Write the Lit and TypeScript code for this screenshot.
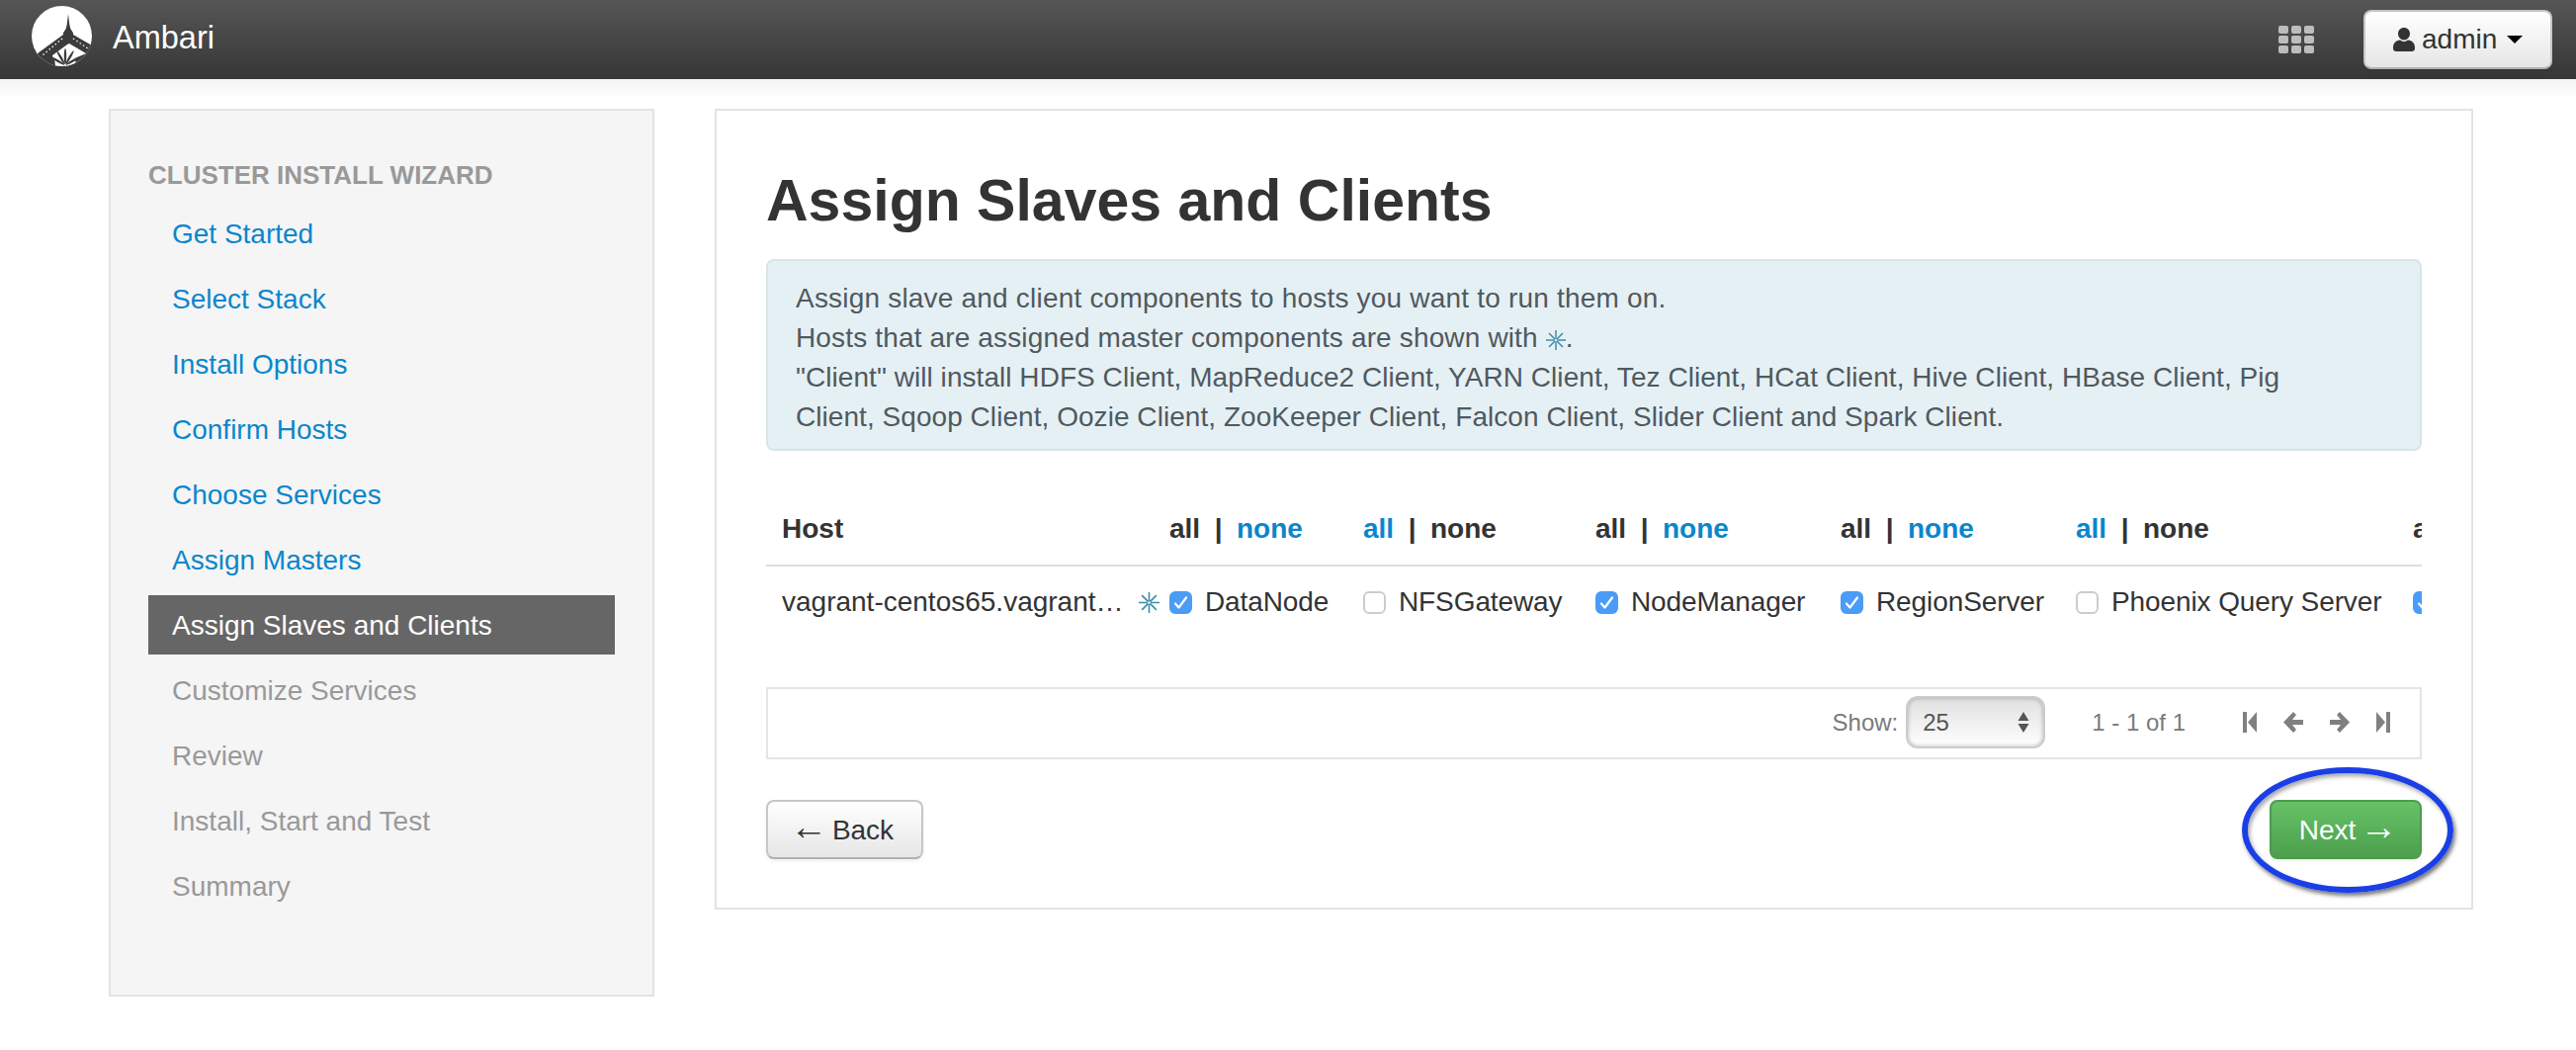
import { LitElement, css, html, svg } from 'lit'

const STEPS = [
   { label: 'Get Started', state: 'done' },
   { label: 'Select Stack', state: 'done' },
   { label: 'Install Options', state: 'done' },
   { label: 'Confirm Hosts', state: 'done' },
   { label: 'Choose Services', state: 'done' },
   { label: 'Assign Masters', state: 'done' },
   { label: 'Assign Slaves and Clients', state: 'active' },
   { label: 'Customize Services', state: 'todo' },
   { label: 'Review', state: 'todo' },
   { label: 'Install, Start and Test', state: 'todo' },
   { label: 'Summary', state: 'todo' },
]

// selected: which of all / none is the plain (non link) one
const COMPONENTS = [
   { label: 'DataNode', checked: true, selected: 'all' },
   { label: 'NFSGateway', checked: false, selected: 'none' },
   { label: 'NodeManager', checked: true, selected: 'all' },
   { label: 'RegionServer', checked: true, selected: 'all' },
   { label: 'Phoenix Query Server', checked: false, selected: 'none' },
   { label: 'Supervisor', checked: true, selected: 'all' },
]

const star = (size: number) => html`<svg class="star" width=${size} height=${size} viewBox="0 0 20 20"><path fill="none" stroke="#3f8ba8" stroke-width="1.500" d="M10 0v20M0 10h20M3 3l14 14M17 3L3 17"/><circle cx="10" cy="10" r="1.500" fill="#cfe6ee"/></svg>`

const logo = html`
   <svg class="logo" width="61" height="61" viewBox="0 0 61 61">
      <defs><clipPath id="disc"><circle cx="30.500" cy="30.500" r="30.500"/></clipPath></defs>
      <circle cx="30.500" cy="30.500" r="30.500" fill="#fff"/>
      <g clip-path="url(#disc)">
         <path fill="#3c3c3c" d="M37 8l1.300 11 1 4 2.700 4.300V29L61 40v21H0V56l7-8.700L32 29v-1.700l2.700-4.300 1-4z"/>
         <path fill="#fff" d="M36 39L21 50l3 11h20l11-13-17-10z"/>
         <path fill="none" stroke="#fff" stroke-width="1.300" stroke-dasharray="1.500 2.500" d="M31 33L11 50M42 33l15 10"/>
         ${[-60, -30, 0, 30, 60].map(angle => svg`
            <ellipse cx="34" cy="51" rx="1.200" ry="8" fill="#3c3c3c" transform="rotate(${angle} 34 60)"/>
         `)}
         <path fill="#3c3c3c" d="M44 53l11-5-10 13zM23 53l-11-2 12 10z"/>
      </g>
   </svg>
`

const gridIcon = html`
   <svg width="36" height="28" viewBox="0 0 36 28">
      ${[0, 1, 2].map(row => [0, 1, 2].map(col => svg`
         <rect x=${col * 13} y=${row * 10} width="10" height="8" rx="2" fill="#bdbdbd"/>
      `))}
   </svg>
`

export class AppRoot extends LitElement {

   renderStep(step: { label: string, state: string }) {
      return html`<a class="step ${step.state}">${step.label}</a>`
   }

   render() {
      return html`
         <header class="navbar">
            <div class="brand">${logo}<span class="brand-name">Ambari</span></div>
            <div class="nav-right">
               ${gridIcon}
               <button class="btn user">
                  <svg width="22" height="24" viewBox="0 0 22 24">
                     <path fill="#333" d="M11 0c3.400 0 6 2.600 6 6s-2.600 6.500-6 6.500S5 9.400 5 6s2.600-6 6-6zM7 12.500c1.100.9 2.500 1.500 4 1.500s2.900-.6 4-1.500c4 .3 7 3 7 7.500v1c0 2-1.500 3-3 3H3c-1.500 0-3-1-3-3v-1c0-4.500 3-7.200 7-7.500z"/>
                  </svg>
                  <span>admin</span>
                  <i class="caret"></i>
               </button>
            </div>
         </header>

         <main class="page">
            <nav class="sidebar">
               <div class="nav-title">CLUSTER INSTALL WIZARD</div>
               ${STEPS.map(step => this.renderStep(step))}
            </nav>

            <section class="content">
               <h2>Assign Slaves and Clients</h2>
               <div class="info">
                  <span class="line-one">Assign slave and client components to hosts you want to run them on.</span><br>
                  <span class="line-two">Hosts that are assigned master components are shown with ${star(20)}.</span><br>
                  <span class="rest">"Client" will install HDFS Client, MapReduce2 Client, YARN Client, Tez Client, HCat Client, Hive Client, HBase Client, Pig Client, Sqoop Client, Oozie Client, ZooKeeper Client, Falcon Client, Slider Client and Spark Client.</span>
               </div>

               <div class="table">
                  <div class="th host-head">Host</div>
                  ${COMPONENTS.map(c => html`
                     <div class="th">
                        <a class=${c.selected === 'all' ? '' : 'link'}>all</a>
                        <span class="sep">|</span>
                        <a class=${c.selected === 'none' ? '' : 'link'}>none</a>
                     </div>
                  `)}
                  <div class="td host">
                     <span class="host-name">vagrant-centos65.vagrantup.com</span>
                     ${star(21)}
                  </div>
                  ${COMPONENTS.map(c => html`
                     <label class="td">
                        <span class="check ${c.checked ? 'on' : ''}">
                           ${c.checked ? html`
                              <svg width="15" height="15" viewBox="0 0 15 15">
                                 <path fill="none" stroke="#fff" stroke-width="2.200" stroke-linecap="round" stroke-linejoin="round" d="M2 8.500l3.500 4L13 2.500"/>
                              </svg>
                           ` : ''}
                        </span>
                        <span class="comp-name">${c.label}</span>
                     </label>
                  `)}
               </div>

               <div class="pager">
                  <span class="show">Show:</span>
                  <div class="select">
                     <span>25</span>
                     <svg width="12" height="21" viewBox="0 0 12 21">
                        <path fill="#555" d="M6 0l5.500 9H.5zM6 21L.5 12h11z"/>
                     </svg>
                  </div>
                  <span class="count">1 - 1 of 1</span>
                  <div class="pager-icons">
                     <svg width="14" height="21" viewBox="0 0 14 21"><path d="M0 0h4v21H0zM14 0v21L5 10.500z"/></svg>
                     <svg width="20" height="21" viewBox="0 0 20 21"><path d="M10 0l3 3-4 5h11v5H9l4 5-3 3L0 10.500z"/></svg>
                     <svg width="20" height="21" viewBox="0 0 20 21"><path d="M10 0l-3 3 4 5H0v5h11l-4 5 3 3 10-10.500z"/></svg>
                     <svg width="14" height="21" viewBox="0 0 14 21"><path d="M14 0h-4v21h4zM0 0v21l9-10.500z"/></svg>
                  </div>
               </div>

               <div class="actions">
                  <button class="btn back"><span class="arrow left">←</span>Back</button>
                  <div class="next-wrap">
                     <button class="btn next">Next<span class="arrow right">→</span></button>
                     <div class="circled"></div>
                  </div>
               </div>
            </section>
         </main>
      `
   }

   static get styles() {
      return css`
         :host {
            display: block;
            width: 2606px;
            min-height: 1062px;
            background: #fff;
            font-family: "Liberation Sans", Arial, sans-serif;
            font-size: 28px;
            line-height: 40px;
            color: #333;
         }

         /* Top bar */
         .navbar {
            height: 80px;
            box-sizing: border-box;
            padding: 6px 24px 0 32px;
            display: flex;
            justify-content: space-between;
            align-items: flex-start;
            background: linear-gradient(#565656, #363636);
         }
         .brand {
            display: flex;
            align-items: center;
            gap: 21px;
            height: 61px;
            color: #fff;
            font-size: 32.500px;
            text-shadow: 0 -1px 0 rgba(0, 0, 0, 0.25);
         }
         .brand-name { padding-top: 2px; }
         .nav-right {
            display: flex;
            align-items: center;
            gap: 50px;
            padding-top: 4px;
         }

         /* Buttons */
         .btn {
            height: 60px;
            box-sizing: border-box;
            font: inherit;
            color: #333;
            border: 2px solid #c6c6c6;
            border-bottom-color: #b0b0b0;
            border-radius: 8px;
            background: linear-gradient(#fff, #e6e6e6);
            box-shadow: 0 2px 4px rgba(0, 0, 0, 0.06);
            padding: 0 0 2px;
         }
         .user {
            width: 191px;
            display: flex;
            align-items: center;
            padding: 0 0 0 28px;
         }
         .user span { margin-left: 7px; }
         .caret {
            margin-left: 10px;
            border-left: 8px solid transparent;
            border-right: 8px solid transparent;
            border-top: 8px solid #000;
         }
         .back {
            width: 159px;
            padding-right: 6px;
         }
         .next {
            width: 154px;
            display: block;
            padding-left: 5px;
            color: #fff;
            border-color: #4f9a4f;
            background: linear-gradient(#66c266, #4d9f4d);
         }
         /* the glyph is short in this font, so it is enlarged */
         .arrow {
            font-size: 38px;
            line-height: 1;
            vertical-align: 0;
         }
         .arrow.left { margin-right: 5px; }
         .arrow.right { margin-left: 4px; }

         /* Page columns */
         .page {
            display: flex;
            align-items: flex-start;
            gap: 61px;
            padding: 30px 0 0 110px;
            background: linear-gradient(#f3f3f3, #fff 20px) no-repeat;
         }

         /* Wizard steps */
         .sidebar {
            width: 552px;
            box-sizing: border-box;
            padding: 45px 38px 80px 38px;
            display: flex;
            flex-direction: column;
            gap: 6px;
            background: #f5f5f5;
            border: 2px solid #e3e3e3;
         }
         .nav-title {
            margin-bottom: 3px;
            font-size: 26px;
            font-weight: bold;
            color: #999;
         }
         .step {
            height: 60px;
            padding-left: 24px;
            line-height: 61px;
         }
         .step.done { color: #0a86cc; }
         .step.todo { color: #999; }
         .step.active {
            color: #fff;
            background: #666;
         }

         /* Main panel */
         .content {
            width: 1779px;
            box-sizing: border-box;
            padding: 55px 50px 49px 50px;
            border: 2px solid #e3e3e3;
         }
         h2 {
            margin: 0 0 23px;
            font-size: 59px;
            line-height: 72px;
            font-weight: bold;
         }
         .info {
            box-sizing: border-box;
            height: 194px;
            padding: 18px 70px 14px 28px;
            color: #50595e;
            background: #e5f0f5;
            border: 2px solid #d8e4e9;
            border-radius: 8px;
         }
         .line-one { letter-spacing: 0.2px; }
         .line-two { letter-spacing: 0.15px; }
         .rest { letter-spacing: 0.05px; }
         .info .star { vertical-align: -3px; }

         /* Host table */
         .table {
            margin-top: 43px;
            display: grid;
            grid-template-columns: 408px 196px 235px 248px 238px 341px 200px;
            width: 1675px;
            overflow: hidden;
         }
         .th {
            height: 72px;
            display: flex;
            align-items: center;
            border-bottom: 2px solid #ddd;
            font-weight: bold;
         }
         .host-head { padding-left: 16px; }
         .sep { margin: 0 14.500px; }
         .link { color: #0a86cc; }
         .td {
            height: 72px;
            display: flex;
            align-items: center;
            gap: 13px;
            white-space: nowrap;
         }
         .comp-name { letter-spacing: -0.1px; }
         .host {
            padding-left: 16px;
            gap: 12px;
         }
         .host-name {
            width: 349px;
            overflow: hidden;
            text-overflow: ellipsis;
         }
         .check {
            width: 23px;
            height: 23px;
            flex: none;
            box-sizing: border-box;
            display: flex;
            align-items: center;
            justify-content: center;
            background: #fff;
            border: 2px solid #ccc;
            border-radius: 6px;
         }
         .check.on {
            background: #4a9cf6;
            border-color: #4a9cf6;
         }

         /* Pager strip */
         .pager {
            margin-top: 50px;
            height: 73px;
            box-sizing: border-box;
            display: flex;
            align-items: center;
            justify-content: flex-end;
            padding: 0 30px 2px 0;
            border: 2px solid #e5e5e5;
            font-size: 24px;
            color: #7a7a7a;
         }
         .select {
            margin-left: 8px;
            width: 141px;
            height: 53px;
            box-sizing: border-box;
            display: flex;
            align-items: center;
            justify-content: space-between;
            padding: 0 14px 0 15px;
            color: #555;
            border: 2px solid #ccc;
            border-radius: 12px;
            background: linear-gradient(#e0e0e0, #fff);
            box-shadow: inset 0 0 4px rgba(0, 0, 0, 0.3);
         }
         .count { margin-left: 47px; }
         .pager-icons {
            margin-left: 58px;
            display: flex;
            align-items: center;
            gap: 27px;
            fill: #808080;
         }

         /* Back / Next */
         .actions {
            margin-top: 41px;
            display: flex;
            justify-content: space-between;
         }
         .next-wrap { position: relative; }
         /* hand drawn annotation over the Next button */
         .circled {
            position: absolute;
            left: -28px;
            top: -33px;
            width: 214px;
            height: 127px;
            box-sizing: border-box;
            border: 6px solid #1a3fe6;
            border-radius: 50%;
            box-shadow: 2px 3px 4px rgba(0, 0, 0, 0.55), inset 2px 3px 4px rgba(0, 0, 0, 0.35);
         }
      `
   }
}

window.customElements.define('app-root', AppRoot)
